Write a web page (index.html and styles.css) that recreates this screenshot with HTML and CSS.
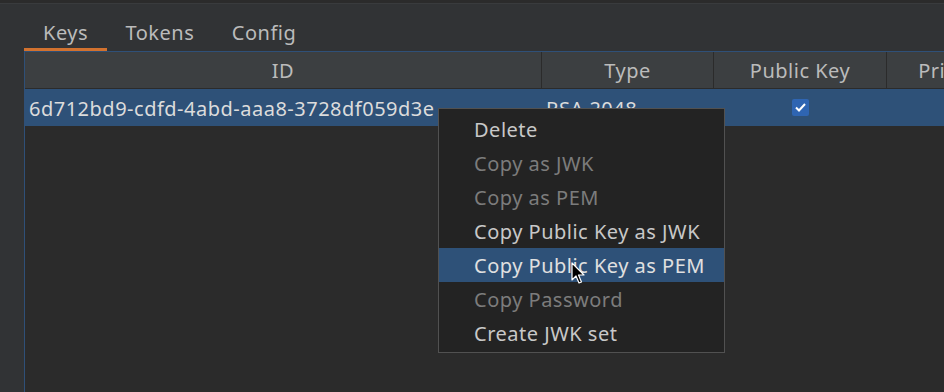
FILE: index.html
```html
<!DOCTYPE html>
<html lang="en">
<head>
<meta charset="utf-8">
<title>Keys</title>
<link rel="stylesheet" href="styles.css">
</head>
<body>
<div class="topbar"></div>
<div class="tabs">
  <div class="tab active">Keys</div>
  <div class="tab">Tokens</div>
  <div class="tab">Config</div>
</div>
<div class="table">
  <div class="thead">
    <div class="th c1">ID</div>
    <div class="th c2">Type</div>
    <div class="th c3">Public Key</div>
    <div class="th c4">Private Key</div>
  </div>
  <div class="row selected">
    <div class="td c1">6d712bd9-cdfd-4abd-aaa8-3728df059d3e</div>
    <div class="td c2">RSA 2048</div>
    <div class="td c3 center"><span class="check"><svg width="11" height="9" viewBox="0 0 11 9"><path d="M1 4.5 L4 7.5 L10 1" fill="none" stroke="#fff" stroke-width="2"/></svg></span></div>
    <div class="td c4"></div>
  </div>
</div>
<div class="menu">
  <div class="item">Delete</div>
  <div class="item disabled">Copy as JWK</div>
  <div class="item disabled">Copy as PEM</div>
  <div class="item">Copy Public Key as JWK</div>
  <div class="item hover">Copy Public Key as PEM</div>
  <div class="item disabled">Copy Password</div>
  <div class="item">Create JWK set</div>
</div>
<svg class="cursor" width="14" height="23" viewBox="0 0 14 23"><path d="M1 1 L1 18 L5 14 L8 21 L10.5 20 L7.5 13 L13 13 Z" fill="#000" stroke="#fff" stroke-width="1.2" stroke-linejoin="round"/></svg>
</body>
</html>
```
FILE: styles.css
```css
html, body {
  margin: 0;
  padding: 0;
}
body {
  width: 944px;
  height: 392px;
  overflow: hidden;
  background: #313335;
  font-family: "Noto Sans", "Open Sans", sans-serif;
  font-size: 20px;
  letter-spacing: 0.5px;
  color: #bbbbbb;
  position: relative;
}
.topbar {
  height: 3px;
  background: #2b2b2b;
  border-bottom: 1px solid #393b3d;
}
.tabs {
  display: flex;
  padding-left: 24px;
  height: 47px;
}
.tab {
  padding: 14px 18.5px 0 19px;
  height: 30px;
  line-height: 30px;
  box-sizing: content-box;
  border-bottom: 3px solid transparent;
}
.tab.active {
  border-bottom-color: #d2722f;
}
.table {
  margin-left: 24px;
  width: 1100px;
  height: 341px;
  border-left: 1px solid #2f5078;
  border-top: 1px solid #2f5078;
  background: #2b2b2b;
}
.thead {
  display: flex;
  height: 36px;
  background: #3c3f41;
  border-bottom: 1px solid #2b2b2b;
}
.th {
  text-align: center;
  padding-top: 2px;
  line-height: 34px;
  border-right: 1px solid #2b2b2b;
  box-sizing: border-box;
  white-space: nowrap;
  overflow: hidden;
}
.c1 { width: 517px; }
.c2 { width: 172px; }
.c3 { width: 173px; }
.c4 { width: 173px; }
.row {
  display: flex;
  height: 37px;
}
.row.selected {
  background: #2e5178;
  color: #dcdcdc;
}
.td {
  padding-top: 2px;
  line-height: 35px;
  padding-left: 4px;
  box-sizing: border-box;
  white-space: nowrap;
}
.td.center {
  padding: 0;
  display: flex;
  justify-content: center;
  align-items: center;
}
.check {
  width: 17px;
  height: 17px;
  border-radius: 2px;
  background: #2f65b2;
  display: flex;
  align-items: center;
  justify-content: center;
}
.menu {
  position: absolute;
  left: 438px;
  top: 108px;
  width: 285px;
  padding: 3px 0 2px;
  background: #232323;
  border: 1px solid #515151;
}
.item {
  height: 34px;
  box-sizing: border-box;
  padding-top: 2px;
  line-height: 32px;
  padding-left: 35px;
  color: #c8c8c8;
  white-space: nowrap;
}
.item.disabled {
  color: #7c7c7c;
}
.item.hover {
  background: #2e5178;
  color: #e0e0e0;
}
.cursor {
  position: absolute;
  left: 571px;
  top: 262px;
}
```
